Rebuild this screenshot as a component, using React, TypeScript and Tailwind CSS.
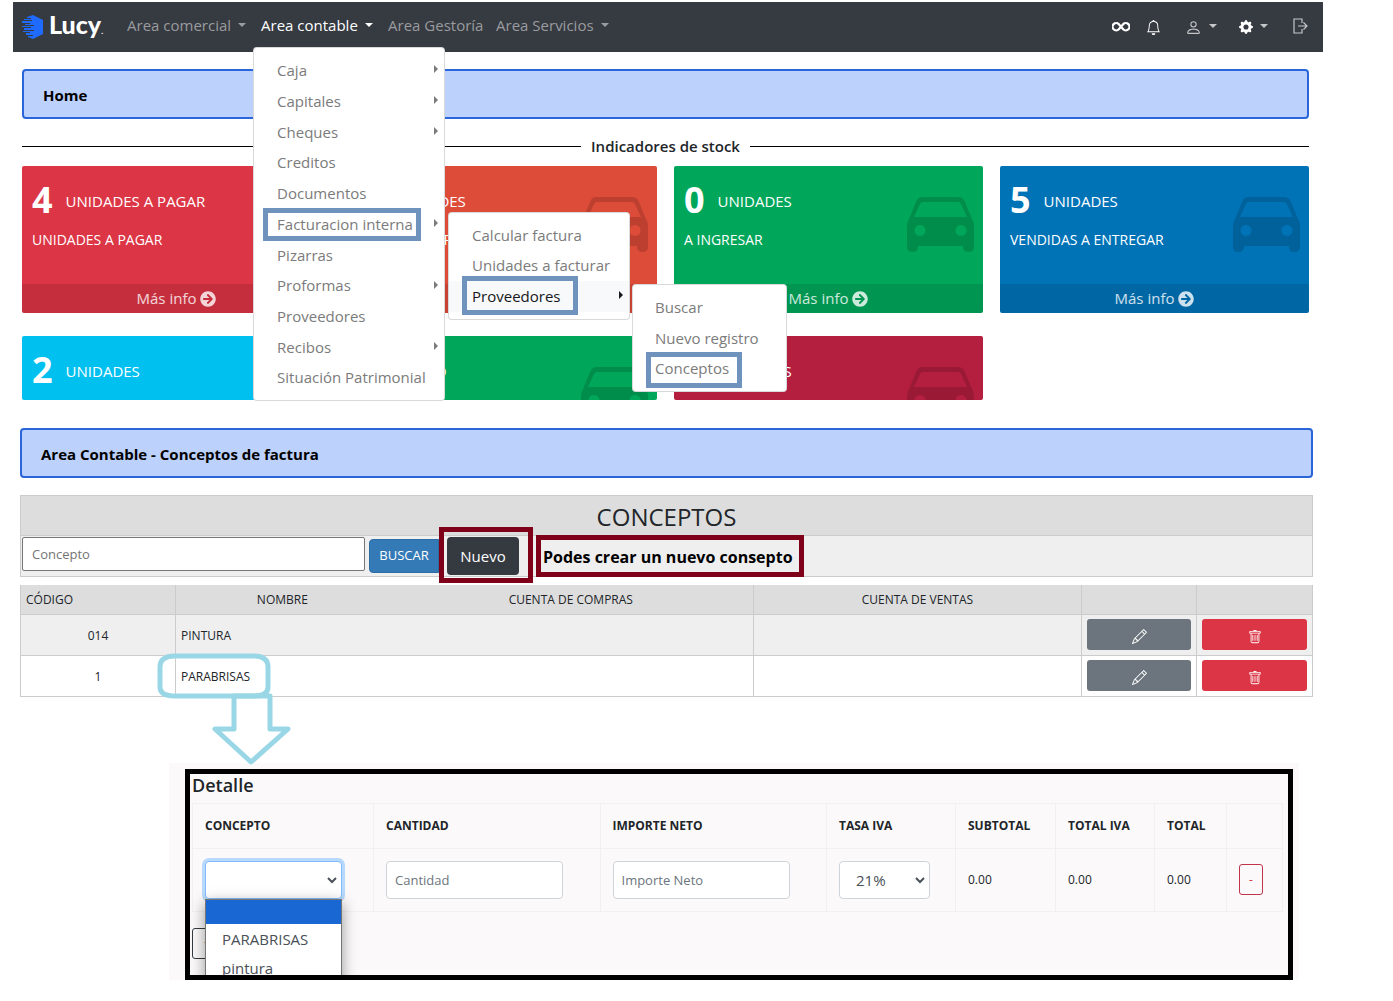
import React from "react";
import {
  BsInfinity,
  BsBell,
  BsPerson,
  BsGearFill,
  BsPencil,
  BsTrash,
} from "react-icons/bs";
import { FaArrowCircleRight } from "react-icons/fa";

function Caret() {
  return <span className="mb-[3px] ml-[7px] inline-block border-x-4 border-t-4 border-x-transparent border-t-current align-middle" />;
}

function Arrow() {
  return <span className="absolute top-1/2 right-[6px] -mt-[5px] border-y-4 border-l-4 border-y-transparent border-l-current" />;
}

function Logo() {
  return (
    <a href="#inicio" className="flex items-center gap-[5px] text-white" aria-label="Lucy">
      <svg width="22" height="24" viewBox="0 0 22 24">
        <path d="M11 0 L21 5 V19 L11 24 L6 22 V21 H11 V20 H4 V18 H8 V17 H1 V16 H12 V15 H2 V13 H9 V12 H0 V11 H12 V10 H3 V9 H8 V8 H0 V6 H10 V5 H2 V4 H9 V3 H5 V2 Z" fill="#1f6bff" />
      </svg>
      <span className="pt-px font-[Lato] text-[25px] leading-6 font-black">
        Lucy<span className="text-[8px]">.</span>
      </span>
    </a>
  );
}

function ExitIcon() {
  return (
    <svg width="16" height="16" viewBox="0 0 16 16" fill="none" stroke="currentColor" strokeWidth="1.200">
      <path d="M10 5 V1 H2 V15 H10 V11" />
      <path d="M6 8 H15 M11.500 4.500 L15 8 L11.500 11.500" />
    </svg>
  );
}

type Item = { label: string; sub?: boolean };

const mainMenu: Item[] = [
  { label: "Caja", sub: true },
  { label: "Capitales", sub: true },
  { label: "Cheques", sub: true },
  { label: "Creditos" },
  { label: "Documentos" },
  { label: "Facturacion interna", sub: true },
  { label: "Pizarras" },
  { label: "Proformas", sub: true },
  { label: "Proveedores" },
  { label: "Recibos", sub: true },
  { label: "Situación Patrimonial" },
];

function Mark({ className }: { className: string }) {
  return <span className={`pointer-events-none absolute border-[5px] border-[#7093bd] ${className}`} />;
}

function Menu() {
  return (
    <div className="absolute top-[43px] -left-2 z-20 flex h-[354px] w-48 flex-col rounded border border-black/15 bg-white py-[7px] text-[15px] text-[#7b7b7b]">
      {mainMenu.map((m) => (
        <div key={m.label} className="relative flex flex-1 items-center pl-[23px]">
          <a href="#menu" className="whitespace-nowrap">{m.label}</a>
          {m.sub && <Arrow />}
          {m.label === "Facturacion interna" && (
            <>
              <Mark className="-top-px left-[9px] h-[33px] w-[158px]" />
              <SubMenu />
            </>
          )}
        </div>
      ))}
    </div>
  );
}

function SubMenu() {
  return (
    <div className="absolute top-[3px] left-[194px] flex h-[108px] w-[182px] flex-col rounded border border-black/15 bg-white py-[7px]">
      <a href="#calcular" className="flex flex-1 items-center pl-[23px]">Calcular factura</a>
      <a href="#unidades" className="flex flex-1 items-center pl-[23px]">Unidades a facturar</a>
      <div className="relative flex flex-1 items-center bg-[#f8f9fa] pl-[23px] text-[#16181b]">
        <a href="#proveedores">Proveedores</a>
        <Arrow />
        <Mark className="-top-[5px] left-[13px] h-[39px] w-[116px]" />
        <div className="absolute top-[3px] left-[183px] flex h-[108px] w-[155px] flex-col rounded border border-black/15 bg-white py-[7px] text-[#7b7b7b]">
          <a href="#buscar" className="flex flex-1 items-center pl-[22px]">Buscar</a>
          <a href="#nuevo" className="flex flex-1 items-center pl-[22px]">Nuevo registro</a>
          <div className="relative flex flex-1 items-center pl-[22px]">
            <a href="#conceptos">Conceptos</a>
            <Mark className="-top-px left-[13px] h-9 w-24" />
          </div>
        </div>
      </div>
    </div>
  );
}

function Navbar() {
  return (
    <nav className="flex h-[50px] items-center bg-[#363a41] pr-[15px] pl-[9px] text-[#9a9c9f]">
      <Logo />
      <div className="ml-6 flex h-full items-center gap-4 pb-1 text-[15px] whitespace-nowrap">
        <button className="w-[118px] text-left">Area comercial<Caret /></button>
        <div className="relative -mb-1 flex h-full w-[111px] items-center pb-1 text-white">
          <button>Area contable<Caret /></button>
          <Menu />
        </div>
        <a href="#gestoria" className="w-[92px]">Area Gestoría</a>
        <button>Area Servicios<Caret /></button>
      </div>
      <div className="ml-auto flex items-center text-[#c4c6c8]">
        <button aria-label="Vista" className="mr-4 text-white"><BsInfinity size={18} stroke="currentColor" strokeWidth={1} /></button>
        <button aria-label="Avisos" className="mr-6 text-white"><BsBell size={15} /></button>
        <button aria-label="Usuario" className="mr-[22px] flex items-center"><BsPerson size={17} /><Caret /></button>
        <button aria-label="Ajustes" className="mr-6 flex items-center"><BsGearFill size={14} className="text-white" /><Caret /></button>
        <button aria-label="Salir" className="pb-[2px]"><ExitIcon /></button>
      </div>
    </nav>
  );
}

function Car() {
  return (
    <svg className="absolute top-[31px] right-[9px] text-black/15" width="67" height="55" viewBox="0 0 67 55" fill="currentColor">
      <path fillRule="evenodd" d="M15 0 H51 Q56 0 58 5 L65 22 Q67 25 67 29 V50 Q67 55 61.500 55 Q56 55 56 50 V49 H11 V50 Q11 55 5.500 55 Q0 55 0 50 V29 Q0 25 2 22 L9 5 Q11 0 15 0 Z M16 5 Q14 5 13 7 L7 20 H60 L54 7 Q53 5 51 5 Z M13 28 a5.500 5.500 0 1 0 0.010 0 Z M54 28 a5.500 5.500 0 1 0 0.010 0 Z" />
    </svg>
  );
}

type CardProps = { n: string; title: string; sub?: string; color: string };

function Card({ n, title, sub, color }: CardProps) {
  return (
    <div className={`relative overflow-hidden rounded-xs text-white ${color} ${sub ? "" : "h-16"}`}>
      <Car />
      <div className="px-[10px] pt-[10px]">
        <div className="flex items-center gap-[13px]">
          <span className="text-4xl leading-[48px] font-bold">{n}</span>
          <span className="pt-[2px] text-[15px] leading-5">{title}</span>
        </div>
        {sub && <p className="mt-[6px] mb-[34px] text-sm leading-5">{sub}</p>}
      </div>
      {sub && (
        <a href="#info" className="flex h-[29px] items-center justify-center gap-1 bg-black/10 text-[15px] text-white/80">
          Más info <FaArrowCircleRight size={16} />
        </a>
      )}
    </div>
  );
}

const cards: CardProps[] = [
  { n: "4", title: "UNIDADES A PAGAR", sub: "UNIDADES A PAGAR", color: "bg-[#dc3545]" },
  { n: "1", title: "UNIDADES", sub: "UNIDADES A PAGAR", color: "bg-[#dd4b39]" },
  { n: "0", title: "UNIDADES", sub: "A INGRESAR", color: "bg-[#00a65a]" },
  { n: "5", title: "UNIDADES", sub: "VENDIDAS A ENTREGAR", color: "bg-[#0073b7]" },
  { n: "2", title: "UNIDADES", color: "bg-[#00c0ef]" },
  { n: "3", title: "PEDIDO", color: "bg-[#00a65a]" },
  { n: "0", title: "UNIDADES", color: "bg-[#b51f3f]" },
];

function Banner({ children }: { children: React.ReactNode }) {
  return (
    <h1 className="rounded border-2 border-[#2a66da] bg-[#bcd1fb] px-[19px] pt-3 pb-[10px] text-[15px] leading-6 font-bold text-black">
      {children}
    </h1>
  );
}

function Home() {
  return (
    <section className="pt-[17px] pr-[14px] pl-[9px]">
      <Banner>Home</Banner>
      <div className="mt-4 flex items-center gap-[10px] text-[#212529]">
        <span className="h-px flex-1 bg-black" />
        <h2 className="text-[15px] leading-[22px] font-semibold">Indicadores de stock</h2>
        <span className="h-px flex-1 bg-black" />
      </div>
      <div className="mt-[9px] grid grid-cols-4 gap-x-[17px] gap-y-[23px]">
        {cards.map((c, i) => (
          <Card key={i} {...c} />
        ))}
      </div>
    </section>
  );
}

function Callout() {
  return (
    <svg className="pointer-events-none absolute -top-[3px] -left-[19px] z-10" width="135" height="114" viewBox="0 0 135 114" fill="none" stroke="#9ad7e6" strokeWidth="5" strokeLinejoin="round">
      <path d="M18 3 H97 Q111 3 111 14 V34 Q111 43 97 43 H18 Q3 43 3 34 V14 Q3 3 18 3 Z" />
      <path d="M77 43 H113 V76 H131 L94 109 L58 76 H77 Z" />
    </svg>
  );
}

const rows = [
  { code: "014", name: "PINTURA" },
  { code: "1", name: "PARABRISAS" },
];

function Conceptos() {
  return (
    <section className="mt-7 pr-[10px] pl-[7px] text-[#212529]">
      <Banner>Area Contable - Conceptos de factura</Banner>
      <div className="mt-[17px] border border-[#ccc] bg-[#efefef]">
        <h2 className="h-10 border-b border-[#ccc] bg-[#ddd] text-center text-2xl leading-[42px]">CONCEPTOS</h2>
        <form className="flex h-10 items-center pl-px">
          <input aria-label="Concepto" placeholder="Concepto" className="mb-1 h-[34px] w-[343px] rounded-xs border border-[#767676] bg-white px-[9px] text-[13px] placeholder:text-[#757575]" />
          <button type="button" className="ml-1 h-[34px] w-[70px] rounded-l border border-[#2e6da4] bg-[#337ab7] text-[13px] text-white">BUSCAR</button>
          <div className="relative z-10 mb-[2px] flex h-14 w-[94px] shrink-0 border-[5px] border-[#7f0019] pt-[5px] pl-[3px]">
            <button type="button" className="h-[38px] w-[72px] rounded bg-[#343a40] text-[15px] text-white">Nuevo</button>
          </div>
          <p className="z-10 ml-[3px] flex h-[42px] w-[268px] items-center border-[5px] border-[#7f0019] pt-[2px] pl-[2px] text-base font-bold whitespace-nowrap text-black">
            Podes crear un nuevo consepto
          </p>
        </form>
      </div>
      <table className="mt-2 w-full table-fixed border-collapse text-xs">
        <colgroup>
          <col className="w-[12%]" />
          <col className="w-[16.5%]" />
          <col />
          <col className="w-[25.4%]" />
          <col className="w-[115px]" />
          <col className="w-[116px]" />
        </colgroup>
        <thead>
          <tr className="h-[29px] border-x border-b border-[#ccc] bg-[#ddd]">
            <th className="border-r border-[#ccc] pt-[2px] pl-[5px] text-left font-normal">CÓDIGO</th>
            <th className="pt-[2px] font-normal">NOMBRE</th>
            <th className="pt-[2px] font-normal">CUENTA DE COMPRAS</th>
            <th className="border-x border-[#ccc] pt-[2px] font-normal">CUENTA DE VENTAS</th>
            <th className="border-r border-[#ccc]" />
            <th />
          </tr>
        </thead>
        <tbody>
          {rows.map((r, i) => (
            <tr key={r.code} className="h-[41px] border border-[#ccc] odd:bg-[#efefef]">
              <td className="border-r border-[#ccc] pt-[2px] text-center">{r.code}</td>
              <td className="relative pt-[2px] pl-[5px]">
                {r.name}
                {i === 1 && <Callout />}
              </td>
              <td />
              <td className="border-x border-[#ccc]" />
              <td className="border-r border-[#ccc] px-[5px]">
                <button aria-label="Editar" className="flex h-[31px] w-full items-center justify-center rounded-[3px] bg-[#6c757d] pt-1 text-white"><BsPencil size={15} /></button>
              </td>
              <td className="px-[5px]">
                <button aria-label="Eliminar" className="flex h-[31px] w-full items-center justify-center rounded-[3px] bg-[#dc3545] pt-1 text-white"><BsTrash size={14} /></button>
              </td>
            </tr>
          ))}
        </tbody>
      </table>
    </section>
  );
}

function Chevron() {
  return (
    <svg className="pointer-events-none absolute top-4 right-[5px]" width="10" height="7" viewBox="0 0 10 7" fill="none" stroke="#495057" strokeWidth="2">
      <path d="M1 1 L5 5 L9 1" />
    </svg>
  );
}

const cell = "border border-[#f2f0f1] pl-3";
const field = "h-[38px] rounded border border-[#ced4da] bg-white text-[#495057]";

function Detalle() {
  return (
    <section className="mt-[66px] mr-6 ml-[156px] bg-[#fbf9fa] pt-[6px] pr-[6px] pl-4 text-[#212529]">
      <div className="h-[211px] overflow-hidden border-[5px] border-black pr-[5px] pl-[2px]">
        <h2 className="text-lg leading-[22px] font-semibold">Detalle</h2>
        <table className="mt-[7px] w-full table-fixed border-collapse text-left text-xs">
          <colgroup>
            <col className="w-[181px]" />
            <col />
            <col />
            <col className="w-[129px]" />
            <col className="w-[100px]" />
            <col className="w-[99px]" />
            <col className="w-[72px]" />
            <col className="w-14" />
          </colgroup>
          <thead>
            <tr className="h-[45px]">
              <th className={cell}>CONCEPTO</th>
              <th className={cell}>CANTIDAD</th>
              <th className={cell}>IMPORTE NETO</th>
              <th className={cell}>TASA IVA</th>
              <th className={cell}>SUBTOTAL</th>
              <th className={cell}>TOTAL IVA</th>
              <th className={cell}>TOTAL</th>
              <th className={cell} />
            </tr>
          </thead>
          <tbody>
            <tr className="h-[63px]">
              <td className={cell}>
                <div className="relative w-[137px]">
                  <select aria-label="Concepto" className="h-[38px] w-full appearance-none rounded border border-[#80bdff] bg-white ring-3 ring-[#b8d9fb]">
                    <option> </option>
                    <option>PARABRISAS</option>
                    <option>pintura</option>
                  </select>
                  <Chevron />
                  <div className="absolute top-[38px] left-0 z-10 w-[137px] border border-[#767676] bg-white text-[15px] leading-[29px] text-[#495057] shadow-[0_4px_14px_rgba(0,0,0,0.4)]">
                    <div className="h-6 bg-[#1967d2]" />
                    <div className="h-[30px] pt-px pl-4">PARABRISAS</div>
                    <div className="h-[30px] pl-4">pintura</div>
                  </div>
                </div>
              </td>
              <td className={cell}><input aria-label="Cantidad" placeholder="Cantidad" className={`${field} w-[177px] px-2 text-[13px] placeholder:text-[#6c757d]`} /></td>
              <td className={cell}><input aria-label="Importe Neto" placeholder="Importe Neto" className={`${field} w-[177px] px-2 text-[13px] placeholder:text-[#6c757d]`} /></td>
              <td className={cell}>
                <div className="relative w-[91px]">
                  <select aria-label="Tasa IVA" className={`${field} w-full appearance-none pl-4 text-[15px]`}>
                    <option>21%</option>
                  </select>
                  <Chevron />
                </div>
              </td>
              <td className={cell}>0.00</td>
              <td className={cell}>0.00</td>
              <td className={cell}>0.00</td>
              <td className={cell}><button aria-label="Quitar" className="h-[31px] w-6 rounded-[3px] border border-[#c2344a] text-[#dc3545]">-</button></td>
            </tr>
          </tbody>
        </table>
        <button aria-label="Agregar" className="mt-4 h-[31px] w-8 rounded-[3px] border border-[#343a40] text-sm">+</button>
      </div>
    </section>
  );
}

export default function App() {
  return (
    <main className="min-h-screen bg-white pt-[2px] pr-[70px] pl-[13px] font-['Open_Sans',sans-serif]">
      <Navbar />
      <Home />
      <Conceptos />
      <Detalle />
    </main>
  );
}
